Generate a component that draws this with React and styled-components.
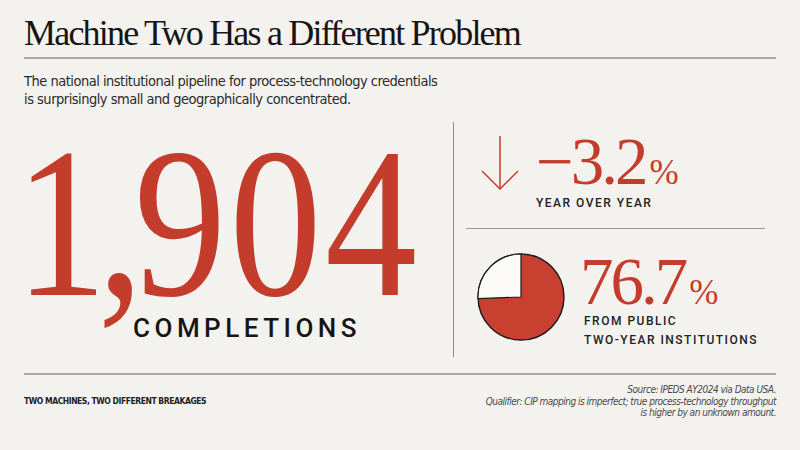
import React from 'react';
import styled, { createGlobalStyle } from 'styled-components';

const red = '#c43d2c';
const ink = '#151515';
const narrow = `"Liberation Sans Narrow", "DejaVu Sans Condensed", "Liberation Sans", sans-serif`;
const serif = `"Liberation Serif", "Times New Roman", serif`;
const grotesk = `Roboto, "Liberation Sans", sans-serif`;

const GlobalStyle = createGlobalStyle`
   html, body {
      margin: 0;
      padding: 0;
      background: #f4f2ee;
   }
`;

const Page = styled.div`
   width: 800px;
   height: 450px;
   box-sizing: border-box;
   padding: 13px 24px 0;
   display: flex;
   flex-direction: column;
   background: #f4f2ee;
   overflow: hidden;
`;

const Title = styled.h1`
   margin: 0;
   font-family: ${serif};
   font-weight: 400;
   font-size: 36px;
   line-height: 40px;
   letter-spacing: -1.8px;
   color: ${ink};
`;

const Rule = styled.div`
   height: ${props => props.thick ? 2 : 1}px;
   background: ${props => props.tone || '#a9a7a3'};
   margin-top: ${props => props.gap || 0}px;
   flex-shrink: 0;
`;

const Lede = styled.p`
   margin: 13px 0 0;
   font-family: ${narrow};
   font-size: 14.5px;
   line-height: 18px;
   letter-spacing: -0.5px;
   color: #2a2a2a;
`;

const Main = styled.div`
   display: grid;
   grid-template-columns: 430px 1fr;
   height: 235px;
   margin-top: 14px;
`;

const LeftCol = styled.div`
   border-right: 1px solid #8d8b88;
   padding-top: 16px;
`;

const BigNumber = styled.div`
   height: 170px;
   font-family: ${serif};
   font-size: 214px;
   line-height: 170px;
   letter-spacing: 4px;
   color: ${red};
   margin-left: -9px;
   white-space: nowrap;
   transform: scaleX(0.86);
   transform-origin: left center;
`;

const Comma = styled.span`
   margin: 0 -15px;
`;

const BigLabel = styled.div`
   margin: 7px 0 0 109px;
   font-family: ${grotesk};
   font-weight: 500;
   font-size: 26px;
   line-height: 26px;
   letter-spacing: 4.5px;
   color: ${ink};
`;

const RightCol = styled.div`
   padding: 9px 11px 0 12px;
   display: flex;
   flex-direction: column;
`;

const StatRow = styled.div`
   display: flex;
   align-items: flex-start;
   gap: ${props => props.gap}px;
   padding-left: ${props => props.indent}px;
   margin-top: ${props => props.top || 0}px;
`;

const Glyph = styled.svg`
   flex-shrink: 0;
   margin-top: ${props => props.offset}px;
`;

const StatText = styled.div`
   display: flex;
   flex-direction: column;
`;

const Value = styled.div`
   font-family: ${serif};
   font-size: 67px;
   line-height: 60px;
   letter-spacing: -3px;
   color: ${red};
   white-space: nowrap;
`;

const Pct = styled.span`
   font-size: 35px;
   line-height: 0;
   letter-spacing: 0;
   margin-left: 4px;
`;

const Label = styled.div`
   margin: ${props => props.top}px 0 0 ${props => props.inset || 0}px;
   font-family: ${grotesk};
   font-weight: 500;
   font-size: 12px;
   line-height: ${props => props.lh}px;
   letter-spacing: 1.5px;
   color: #222;
`;

const Footer = styled.div`
   display: flex;
   justify-content: space-between;
   align-items: center;
   padding-top: 9px;
`;

const Kicker = styled.div`
   font-family: ${narrow};
   font-weight: 700;
   font-size: 8.5px;
   letter-spacing: -0.45px;
   color: #222;
`;

const Notes = styled.div`
   font-family: ${narrow};
   font-style: italic;
   font-size: 10px;
   line-height: 11.5px;
   letter-spacing: -0.5px;
   text-align: right;
   color: #4a4a4a;
`;

const DownArrow = () => (
   <Glyph width="38" height="56" viewBox="0 0 38 56" offset={4}>
      <line x1="19" y1="1" x2="19" y2="54" stroke={red} strokeWidth="1.5" />
      <polyline points="1,36 19,54 37,36" fill="none" stroke={red} strokeWidth="1.5" />
   </Glyph>
);

const Pie = ({ share }) => {
   const r = 43;
   const c = 45;
   // white slice runs counter-clockwise from 12 o'clock
   const a = ((100 - share) / 100) * Math.PI * 2;
   const x = c - r * Math.sin(a);
   const y = c - r * Math.cos(a);
   return (
      <Glyph width="90" height="90" viewBox="0 0 90 90" offset={1}>
         <circle cx={c} cy={c} r={r} fill="#c8402f" stroke="#1a1a1a" strokeWidth="1.4" />
         <path
            d={`M${c},${c} L${c},${c - r} A${r},${r} 0 0,0 ${x.toFixed(2)},${y.toFixed(2)} Z`}
            fill="#fbfaf7"
            stroke="#1a1a1a"
            strokeWidth="1.2"
         />
      </Glyph>
   );
};

export default function App() {
   return (
      <Page>
         <GlobalStyle />
         <Title>Machine Two Has a Different Problem</Title>
         <Rule thick gap={4} />
         <Lede>
            The national institutional pipeline for process-technology credentials
            <br />
            is surprisingly small and geographically concentrated.
         </Lede>
         <Main>
            <LeftCol>
               <BigNumber>
                  1<Comma>,</Comma>904
               </BigNumber>
               <BigLabel>COMPLETIONS</BigLabel>
            </LeftCol>
            <RightCol>
               <StatRow gap={17} indent={15}>
                  <DownArrow />
                  <StatText>
                     <Value>
                        −3.2<Pct>%</Pct>
                     </Value>
                     <Label top={4} lh={16}>YEAR OVER YEAR</Label>
                  </StatText>
               </StatRow>
               <Rule gap={17} tone="#9b9995" />
               <StatRow gap={14} indent={10} top={22}>
                  <Pie share={74.4} />
                  <StatText>
                     <Value>
                        76.7<Pct>%</Pct>
                     </Value>
                     <Label top={1} lh={18.5} inset={4}>
                        FROM PUBLIC
                        <br />
                        TWO-YEAR INSTITUTIONS
                     </Label>
                  </StatText>
               </StatRow>
            </RightCol>
         </Main>
         <Rule thick gap={16} />
         <Footer>
            <Kicker>TWO MACHINES, TWO DIFFERENT BREAKAGES</Kicker>
            <Notes>
               Source: IPEDS AY2024 via Data USA.
               <br />
               Qualifier: CIP mapping is imperfect; true process-technology throughput
               <br />
               is higher by an unknown amount.
            </Notes>
         </Footer>
      </Page>
   );
}
